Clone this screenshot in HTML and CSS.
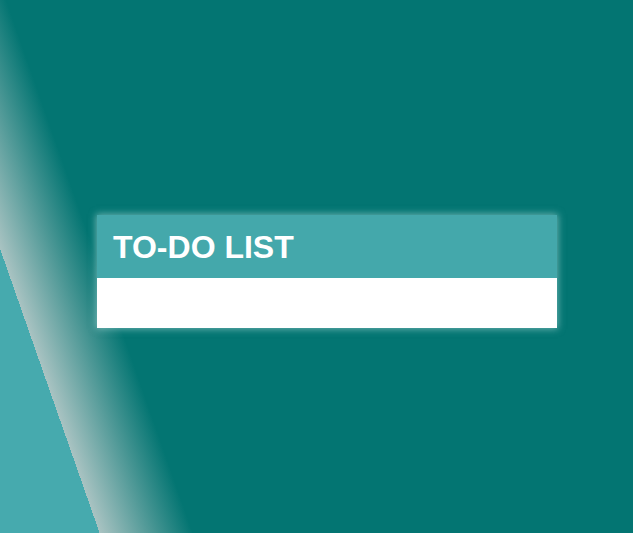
FILE: index.html
```html
<!DOCTYPE html>
<html>
<head>
<meta charset="utf-8">
<link rel="stylesheet" href="styles.css">
</head>
<body>
<div class="page">
  <div class="card">
    <div class="card-header"><h1 class="title">TO-DO LIST</h1></div>
    <div class="card-body"></div>
  </div>
</div>
</body>
</html>
```
FILE: styles.css
```css
html, body {
  margin: 0;
  height: 100%;
}
body {
  background: linear-gradient(70.7deg, #46aaae 0, #46aaae 94px, #a9c3c2 94px, #037572 182px, #037572 100%);
  font-family: "Liberation Sans", Arial, sans-serif;
  overflow: hidden;
}
.page {
  padding: 215px 0 0 97px;
}
.card {
  width: 460px;
  box-shadow: 0 0 7px 1px rgba(190, 225, 225, 0.55);
}
.card-header {
  background: #44a8ab;
  height: 63px;
  display: flex;
  align-items: center;
  padding: 0 16px;
  box-sizing: border-box;
}
.title {
  margin: 0;
  color: #ffffff;
  font-size: 32px;
  font-weight: bold;
  line-height: 1;
}
.card-body {
  background: #ffffff;
  height: 50px;
}
```
